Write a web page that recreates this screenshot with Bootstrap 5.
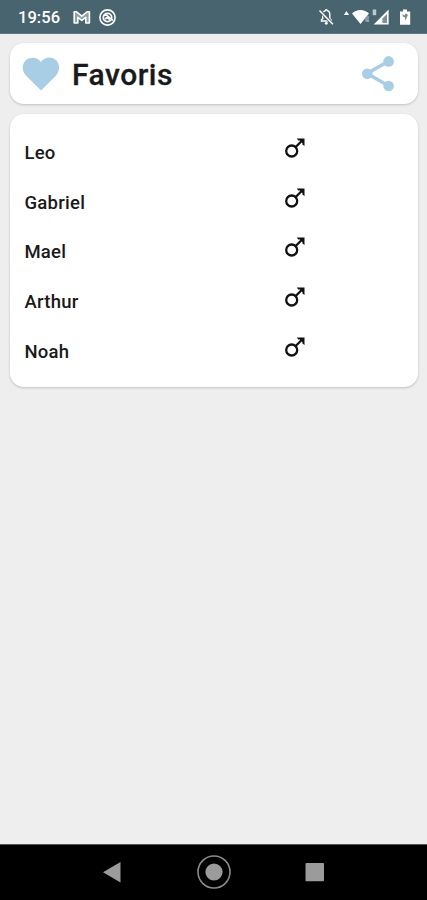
<!DOCTYPE html>
<html lang="fr">
<head>
<meta charset="utf-8">
<meta name="viewport" content="width=device-width, initial-scale=1">
<title>Favoris</title>
<link href="https://cdn.jsdelivr.net/npm/bootstrap@5.3.0/dist/css/bootstrap.min.css" rel="stylesheet">
<style>
body{font-family:Roboto,"Liberation Sans",sans-serif;background:#eee;color:#1a1a1a}
.screen{height:900px;overflow:hidden}
.statusbar{height:34px;background:#48656f;border-bottom:1px solid #5f7780;color:#fff;padding:1px 15px 0 18px}
.clock{font-size:16.5px;font-weight:500;letter-spacing:.05px;line-height:32px;width:54px;padding-top:1px}
.panel{border:0;border-radius:14px;background:#fff;box-shadow:0 1px 2.5px rgba(0,0,0,.2);margin:0 9px 0 10px}
.title-panel{height:61px;margin-top:9px;padding:0 23px 0 12px}
.names-panel{height:273px;margin-top:10px;padding:13.5px 14px 0}
.page-title{font-size:30px;font-weight:500;line-height:60px;padding-top:2px;margin-left:12px;letter-spacing:.5px;-webkit-text-stroke:.3px}
.name-row{height:49.7px}
.name-label{width:260px;font-size:18.5px;font-weight:500;letter-spacing:.28px;line-height:28px;padding:1px 0 0 .4px}
.gender{margin-top:-9px}
.navbar-keys{height:56px;background:#000;border-top:1px solid #555}
svg{display:block;flex:none}
</style>
<script src="https://cdn.jsdelivr.net/npm/bootstrap@5.3.0/dist/js/bootstrap.bundle.min.js"></script>
</head>
<body>
<svg class="d-none"><symbol id="male" viewBox="0 0 22 22"><g fill="none" stroke="#111" stroke-width="2.3"><circle cx="7.7" cy="14" r="5.5"/><path d="M11.7 10 18.4 3.3"/></g><path d="M12.8 1.4h7.7v7.7l-2.1-1.5V6l-2.5-2.5h-1.6z" fill="#111"/></symbol></svg>
<div class="screen d-flex flex-column">
  <header class="statusbar d-flex align-items-center">
    <span class="clock">19:56</span>
    <svg width="20" height="18" viewBox="0 0 20 18"><path d="M2.2 15V3.7h2l5.6 4.4 5.6-4.4h2V15h-3.6V9.3l-4 3.2-4-3.2V15z" fill="#8fa1a8" stroke="#fff" stroke-width="1.6" stroke-linejoin="round"/></svg>
    <svg class="ms-1" width="23" height="19" viewBox="-2 0 23 19" fill="none" stroke="#fff"><circle cx="9.5" cy="9.5" r="7.6" stroke-width="1.6"/><circle cx="9.5" cy="9.5" r="4.2" stroke-width="1.8"/><path d="m5.5 7.5 3-.5 6.5 5.5M7 11l2-1.5 3 2" stroke-width="1.6"/></svg>
    <svg class="ms-auto" width="94" height="22" viewBox="318 6 94 22">
      <path d="M321.5 21v-1.3l1.3-1.3v-4c0-2 1-3.2 2.5-3.7 0-1.4 2-1.4 2 0 1.6.5 2.5 1.8 2.5 3.7v4l1.3 1.3V21z" fill="none" stroke="#fff" stroke-width="1.4"/><circle cx="326.3" cy="23.3" r="1.4" fill="#fff"/><path d="m320 10.6 13 13.8" stroke="#48656f" stroke-width="3.2"/><path d="m319.5 10.6 13.4 13.7" stroke="#fff" stroke-width="1.5"/>
      <path d="m346.5 11 2.6 4h-5.2zM352 13.6c4.5-4.8 12.5-4.8 17 0L360.5 24z" fill="#fff"/>
      <path d="M366 17v4h3M368 16v6" fill="none" stroke="#a9b8bd" stroke-width="1.2"/>
      <path d="M372.7 9.5h3.5v5.7h-3.5z" fill="#bdc9cd"/><path d="M388.6 9.5v15H373.7z" fill="#fff"/><path d="M387 14v9h-4.6v-4.6z" fill="#7b9097"/>
      <path d="M400 11.5h3v-2h4v2h3.2v13.2H400z" fill="#fff"/><path d="m402.5 14 1.8 1.5 1.5-2 2.2 1.2-2.7 6-.4-3.5-2.2-.7z" fill="#758b93"/>
    </svg>
  </header>
  <section class="card panel title-panel flex-row align-items-center">
    <svg width="38" height="36" viewBox="0 0 38 36"><path d="M19 34.5 3.9 19.4C-.6 14.8.1 8 3.6 4.6 8 .4 15.5 1 19 6.1 22.5 1 30-.1 34.4 4.6 38 8.3 38 14.9 34.1 19.4z" fill="#a8cee5"/></svg>
    <h1 class="page-title mb-0">Favoris</h1>
    <svg class="ms-auto" width="34" height="37" viewBox="0 0 34 37"><path d="M28 6 6 18.5 28 31" fill="none" stroke="#a8cee5" stroke-width="3.5"/><g fill="#a8cee5"><circle cx="27.6" cy="6.4" r="5.3"/><circle cx="6.3" cy="18.8" r="5.3"/><circle cx="27.6" cy="31" r="5.3"/></g></svg>
  </section>
  <main class="card panel names-panel">
    <div class="name-row d-flex align-items-center"><span class="name-label">Leo</span><svg class="gender" width="22" height="22"><use href="#male"/></svg></div>
    <div class="name-row d-flex align-items-center"><span class="name-label">Gabriel</span><svg class="gender" width="22" height="22"><use href="#male"/></svg></div>
    <div class="name-row d-flex align-items-center"><span class="name-label">Mael</span><svg class="gender" width="22" height="22"><use href="#male"/></svg></div>
    <div class="name-row d-flex align-items-center"><span class="name-label">Arthur</span><svg class="gender" width="22" height="22"><use href="#male"/></svg></div>
    <div class="name-row d-flex align-items-center"><span class="name-label">Noah</span><svg class="gender" width="22" height="22"><use href="#male"/></svg></div>
  </main>
  <footer class="navbar-keys mt-auto d-flex justify-content-center">
    <svg width="427" height="55" viewBox="0 845 427 55" fill="#9b9b9b"><path d="M103 872.2 120.5 862v20.4z"/><circle cx="214" cy="872" r="8.6"/><circle cx="214" cy="872" r="16" fill="none" stroke="#8b8b8b" stroke-width="1.6"/><rect x="305.5" y="863" width="18.5" height="18.3" rx="1"/></svg>
  </footer>
</div>
</body>
</html>
